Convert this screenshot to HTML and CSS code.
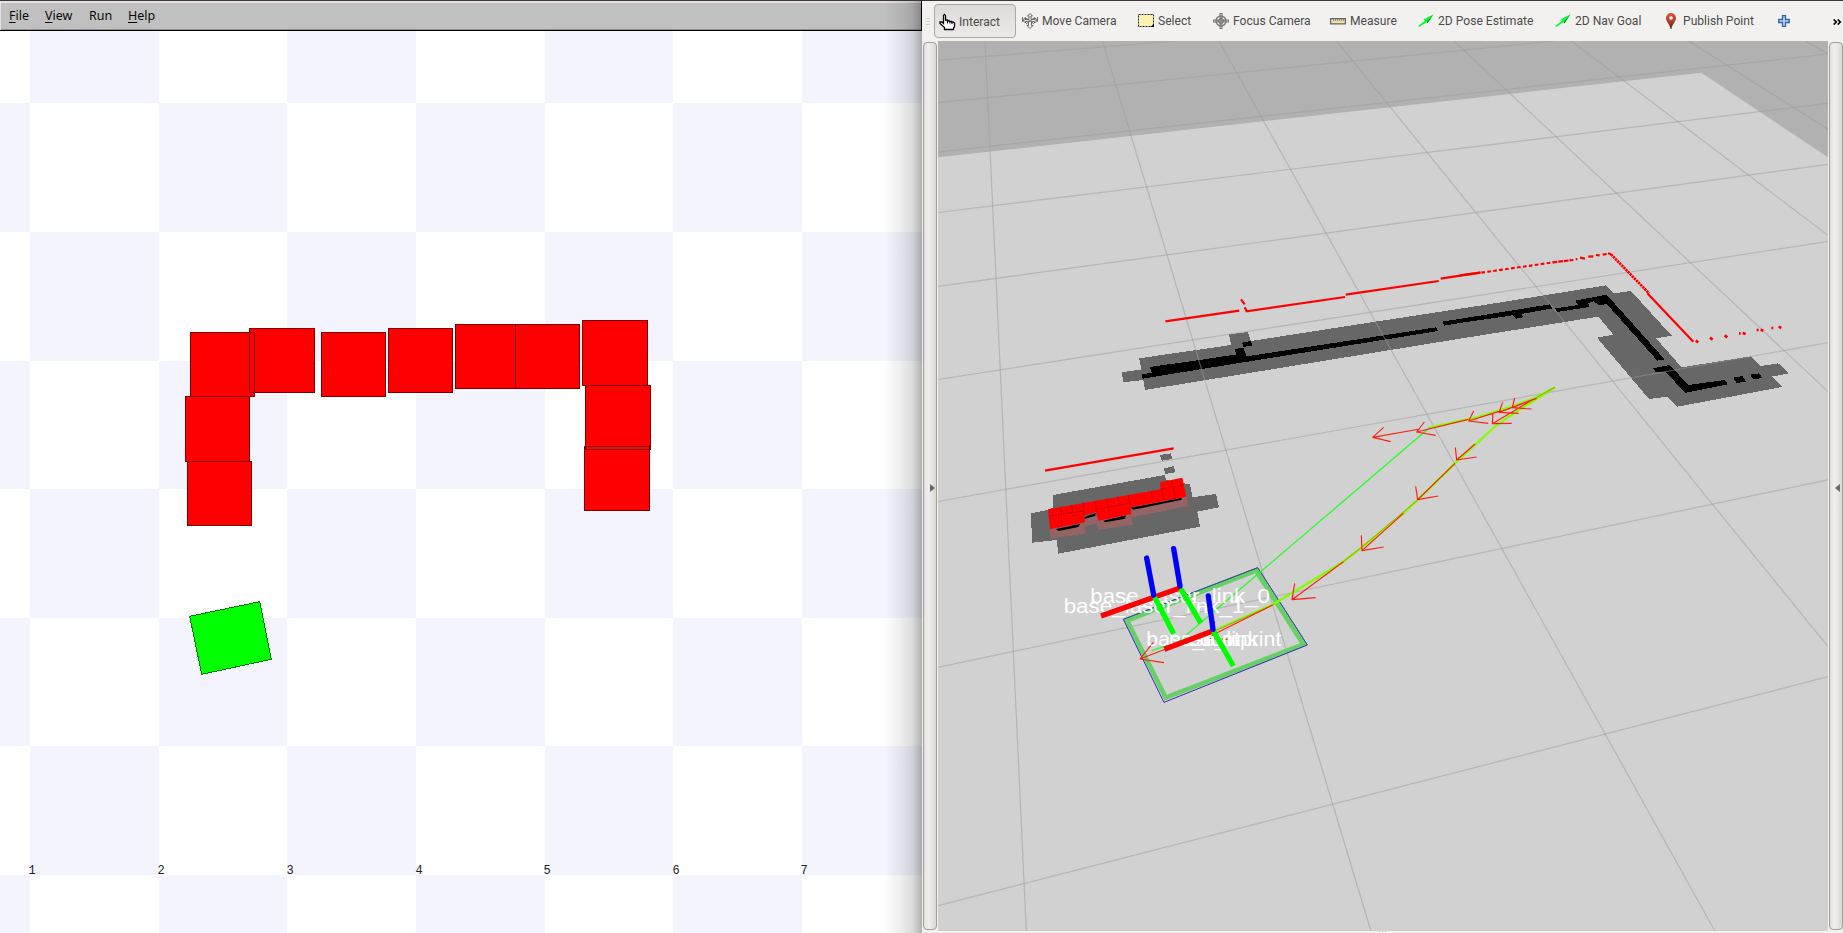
FILE: index.html
```
<!DOCTYPE html>
<html lang="en">
<head>
<meta charset="utf-8">
<title>Stage and RViz</title>
<link rel="stylesheet" href="styles.css">
</head>
<body>
<div class="desktop">
  <section class="stage">
    <nav class="menubar">
      <span class="menu-file"><u>F</u>ile</span>
      <span class="menu-view"><u>V</u>iew</span>
      <span class="menu-run">Run</span>
      <span class="menu-help"><u>H</u>elp</span>
    </nav>
    <svg class="world" viewBox="0 31 922 902" shape-rendering="crispEdges">
      <rect y="31" width="922" height="902" fill="#fff"/>
      <path fill="#f4f4ff" d="M30 31H159V103H30ZM287 31H416V103H287ZM545 31H673V103H545ZM802 31H922V103H802Z
        M0 103H30V232H0ZM159 103H287V232H159ZM416 103H545V232H416ZM673 103H802V232H673Z
        M30 232H159V361H30ZM287 232H416V361H287ZM545 232H673V361H545ZM802 232H922V361H802Z
        M0 361H30V489H0ZM159 361H287V489H159ZM416 361H545V489H416ZM673 361H802V489H673Z
        M30 489H159V618H30ZM287 489H416V618H287ZM545 489H673V618H545ZM802 489H922V618H802Z
        M0 618H30V746H0ZM159 618H287V746H159ZM416 618H545V746H416ZM673 618H802V746H673Z
        M30 746H159V875H30ZM287 746H416V875H287ZM545 746H673V875H545ZM802 746H922V875H802Z
        M0 875H30V933H0ZM159 875H287V933H159ZM416 875H545V933H416ZM673 875H802V933H673Z"/>
      <g class="boxes">
        <path d="M190.500 332.500h64v64h-64zM249.500 328.500h65v64h-65zM321.500 332.500h64v64h-64zM388.500 328.500h64v64h-64zM455.500 324.500h60v64h-60zM515.500 324.500h64v64h-64zM582.500 320.500h65v65h-65zM585.500 385.500h65v64h-65zM584.500 446.500h65v64h-65zM185.500 396.500h64v65h-64zM187.500 461.500h64v64h-64z"/>
      </g>
      <path class="robot" d="M189.700 616.300L259.700 601.700L271.300 659.300L201.700 674.300Z"/>
      <g class="ticks">
        <text x="28.500" y="874">1</text><text x="157.500" y="874">2</text><text x="286.500" y="874">3</text><text x="415.500" y="874">4</text><text x="543.500" y="874">5</text><text x="672.500" y="874">6</text><text x="800.500" y="874">7</text>
      </g>
    </svg>
    <div class="shade"></div>
  </section>

  <section class="rviz">
    <div class="toolbar">
      <div class="grip"><i></i><i></i><i></i></div>
      <div class="tool active">
        <svg class="icon" viewBox="0 0 16 16"><path d="M5.500 15.500V13.500L1 9.500V8H3L4.500 9.500V1.500L5.500 .5L6.500 1.500V6H8.500V7H10.500V7.500H12.500V8H14L15.500 9V13L14.500 14V15.500Z" fill="#fff" stroke="#000" stroke-width="1.300"/><path d="M8.500 6.500V9.500M11 7V9.500M13 8V10" stroke="#000" fill="none"/></svg>
        <span>Interact</span>
      </div>
      <div class="tool t-move">
        <svg class="icon" viewBox="0 0 16 16" fill="#f4f4f4" stroke="#555" stroke-width=".9"><path d="M8 .5L10.500 3H9V6.500H12.500V4.500L15.500 7L12.500 10V8.500H9.500V12.500H11L8 15.500L5 12.500H6.500V8.500H3.500V10L.5 7L3.500 4.500V6.500H7V3H5.500Z"/><path d="M.5 4V8.500L4 6M15.500 4V8.500L12 6M4 5L12 11M12 5L4 11" fill="none" stroke-width=".8"/></svg>
        <span>Move Camera</span>
      </div>
      <div class="tool t-select">
        <svg class="icon" viewBox="0 0 16 16"><path d="M.5 1.500H15.500V13.500H.5Z" fill="#fdf2b4" stroke="#222" stroke-dasharray="2 1"/><path d="M16 10.500V14H12.500Z" fill="#000"/></svg>
        <span>Select</span>
      </div>
      <div class="tool t-focus">
        <svg class="icon" viewBox="0 0 16 16" fill="none" stroke="#777"><path d="M8 0V16M0 8H16" stroke="#777" stroke-width="3"/><path d="M8 1V15M1 8H15" stroke="#ddd"/><circle cx="8" cy="8" r="5" stroke-width="1.400"/><circle cx="8" cy="8" r="2.500"/><path d="M8 4V12M4 8H12"/></svg>
        <span>Focus Camera</span>
      </div>
      <div class="tool t-measure">
        <svg class="icon" viewBox="0 0 16 16"><path d="M.6 5.600H15.400V10.900H.6Z" fill="#eee0a0" stroke="#666" stroke-width="1.200"/><path d="M3.500 6V8M5.500 6V8M7.500 6V8M9.500 6V8M11.500 6V8M13.500 6V8" stroke="#777" stroke-width=".8"/></svg>
        <span>Measure</span>
      </div>
      <div class="tool t-pose">
        <svg class="icon" viewBox="0 0 16 16"><path d="M15.500 1.200L5.500 6.500L7 7.800L.2 13L1.200 14L8.500 9.300L9.500 10.200Z" fill="#0f3"/><path d="M15.500 1.200L8.700 9.300L9.500 10.200Z" fill="#0a7a1a"/></svg>
        <span>2D Pose Estimate</span>
      </div>
      <div class="tool t-nav">
        <svg class="icon" viewBox="0 0 16 16"><path d="M15.500 1.200L5.500 6.500L7 7.800L.2 13L1.200 14L8.500 9.300L9.500 10.200Z" fill="#0f3"/><path d="M15.500 1.200L8.700 9.300L9.500 10.200Z" fill="#0a7a1a"/></svg>
        <span>2D Nav Goal</span>
      </div>
      <div class="tool t-publish">
        <svg class="icon" viewBox="0 0 16 16"><defs><linearGradient id="pin" x2="0" y2="1"><stop stop-color="#e0533a"/><stop offset=".5" stop-color="#b8402a"/><stop offset="1" stop-color="#3a3010"/></linearGradient></defs><path d="M8 0A5 5 0 0 1 13 5C13 9 9 11 8.500 16H7.500C7 11 3 9 3 5A5 5 0 0 1 8 0Z" fill="url(#pin)"/><circle cx="8" cy="5" r="1.800" fill="#fff"/></svg>
        <span>Publish Point</span>
      </div>
      <div class="tool t-plus">
        <svg class="icon plus" viewBox="0 0 12 12"><path d="M4.500 .7H7.500V4.500H11.300V7.500H7.500V11.300H4.500V7.500H.7V4.500H4.500Z" fill="#b9d2ee" stroke="#3465a4" stroke-width="1.300"/></svg>
      </div>
      <svg class="more" viewBox="0 0 9 6" fill="none" stroke="#000" stroke-width="1.600"><path d="M.7 .4L3.300 3L.7 5.600M4.700 .4L7.300 3L4.700 5.600"/></svg>
    </div>
    <div class="body">
      <div class="splitter left"><svg viewBox="0 0 5 8"><path d="M0 0L5 4L0 8Z" fill="#666"/></svg></div>
      <svg class="scene" viewBox="938 41 890 890">
        <rect x="938" y="41" width="890" height="890" fill="#b1b1b1"/>
        <path d="M938 157.300L1701.300 72.700L1828 157.300V931H938Z" fill="#d1d1d1"/>
        <!-- costmap walls -->
        <g transform="translate(1100 240) scale(.33333)" shape-rendering="crispEdges">
          <path fill="#676767" d="M65 397L125 388L117 355L393 315L387 283L443 276L453 303L820 246L1140 197L1518 136L1543 160L1593 153L1715 287L1668 295L1745 382L1952 349L1982 378L2035 370L2066 400L2015 410L2046 441L1733 500L1702 470L1647 477L1491 293L1540 284L1495 230L1080 296L135 450L130 420L70 427Z"/>
          <path d="M150 381L298 360L410 343L403 327L430 323L440 349L1008 262L1015 273L300 388L128 416L126 403L155 398ZM426 308L453 303L456 317L430 321ZM1027 245L1350 193L1358 205L1265 222L1270 232L1250 236L1238 226L1080 249L1032 257Z"/>
        </g>
        <g transform="translate(1460 230) scale(.33333)" shape-rendering="crispEdges">
          <path d="M285 235L355 225L345 212L440 194L614 388L592 392L440 222L418 226L400 214L385 220L388 231L292 246ZM580 415L630 405L684 465L795 450L803 463L675 489L618 426L587 427ZM820 443L848 438L857 455L830 459ZM870 434L897 430L907 444L880 448Z"/>
        </g>
        <g transform="translate(1010 430) scale(.33333)" shape-rendering="crispEdges" fill="#676767">
          <path d="M129 195L465 135L468 150L540 163L548 202L618 192L627 232L562 245L570 290L145 371L140 330L67 338L62 250L113 240L130 232ZM450 75L483 70L487 87L455 92ZM462 115L492 108L495 127L465 132Z"/>
        </g>
        <g class="grid">
          <path d="M938 60.200L1177 41M938 102.700L1554 41M938 152L1828 54M938 212.500L1828 103.300M938 286.300L1828 164.300M938 379.500L1828 241.300M938 501.500L1828 342.700M938 667.300L1828 479.800M938 905.700L1828 676.700"/>
          <path d="M985 41L1026.300 931M1102.500 41L1370.900 931M1219 41L1714.900 931M1336.700 41L1828 646.700M1454 41L1828 391.600M1571.300 41L1828 235.300M1688.700 41L1828 129.300M1805.700 41L1828 53.700"/>
        </g>
        <!-- laser scan -->
        <g transform="translate(1100 240) scale(.33333)" class="scan">
          <path d="M196 244L418 212M423 178L434 193M434 202L440 214L735 171M737 164L1016 123M1022 116L1140 98"/>
        </g>
        <g transform="translate(1460 230) scale(.33333)" class="scan">
          <path d="M0 136L62 128"/>
          <path d="M64 128L280 97" stroke-dasharray="11 7"/>
          <path d="M278 97L340 90" stroke-dasharray="14 3"/>
          <path d="M347 88L352 87M360 83L375 86M385 80L400 79M408 75L419 76M428 74L440 72M444 70L454 73"/>
          <path d="M453 73L567 190" stroke-width="8" stroke-dasharray="7 2"/>
          <path d="M562 190L700 335"/>
          <path d="M707 332L715 337M750 323L758 329M794 316L802 322M837 310h5M848 309L857 312M890 300h6M902 299L910 302M934 294h6M956 290L964 294" stroke-width="8"/>
        </g>
        <g transform="translate(1010 430) scale(.33333)">
          <path class="scan" stroke-width="7" d="M105 122L491 55"/>
          <path fill="#946363" d="M120 290L122 326L228 310L225 288L262 280L265 300L369 284L365 262L536 228L528 195Z" shape-rendering="crispEdges"/>
          <path d="M138 297L210 282L205 291L145 303ZM222 262L258 249L255 258L225 266ZM280 272L348 256L345 266L285 277ZM362 233L515 204L515 209L370 239Z"/>
          <path fill="#f00" d="M114 238L452 178L450 157L517 143L529 200L362 232L364 252L265 272L258 247L222 257L225 277L120 298Z"/>
          <path fill="none" stroke="#b00" stroke-width="2" d="M116 258L218 243M185 225L188 248M152 232L157 290M220 218L223 255M254 212L259 245M290 207L295 230M323 200L328 224M355 195L361 228M424 184L428 212M452 176L520 165M486 152L496 204M258 237L360 220M295 229L299 264M154 253L220 243M454 176L462 210"/>

          <!-- footprint -->
          <path d="M351 572L738 422L880 643L467 803Z" fill="none" stroke="#66d066" stroke-width="14"/>
          <path d="M340 568L743 413L892 645L462 817Z" fill="none" stroke="#3c20c8" stroke-width="3"/>
          <path d="M340 568L743 413L892 645" fill="none" stroke="#2f7060" stroke-width="2"/>
        </g>
        <g transform="translate(1260 370) scale(.33333)" fill="none" stroke-linejoin="round">
          <path stroke="#2f2" stroke-width="3.700" d="M510 172L0 607L-245 815L-325 842"/>
          <path stroke="#80ff00" stroke-width="7" d="M885 52L820 86L760 108L650 142L510 172M885 52L780 118L710 165L590 275L475 388L430 430L305 532L250 575L45 700L-140 783"/>
          <path stroke="#c08010" stroke-width="2.500" d="M885 52L820 88M585 280L475 388L305 532L250 575M45 702L-140 785"/>
          <path stroke="#ff2010" stroke-width="3.500" d="M480 177L338 202M371 172L338 202L392 215M625 148L470 186M493 156L470 186L527 196M725 122L626 153M641 123L626 153L685 160M820 88L717 127M728 97L717 127L776 130M830 85L757 113M764 84L757 113L815 117M820 88L697 161M699 128L697 161L755 160M645 222L590 270M586 232L590 270L650 261M585 280L473 389M467 349L473 389L535 378M430 430L306 542M304 496L306 542L371 531M250 575L96 689M104 640L96 689L167 683M38 705L-162 805M-135 755L-162 805L-88 808M-285 838L-360 867M-320 817L-360 867L-288 878"/>
        </g>
        <g transform="translate(1010 430) scale(.33333)">
          <g class="frames">
            <text x="241" y="519" textLength="539" lengthAdjust="spacingAndGlyphs">base_laser_link_0</text>
            <text x="161" y="549" textLength="542" lengthAdjust="spacingAndGlyphs">base_laser_link_1</text>
            <text x="409" y="649" textLength="405" lengthAdjust="spacingAndGlyphs">base_footprint</text>
            <text x="477" y="649" textLength="268" lengthAdjust="spacingAndGlyphs">base_link</text>
            <text x="538" y="649" textLength="148" lengthAdjust="spacingAndGlyphs">odom</text>
          </g>
          <g fill="none" stroke-width="16">
            <path stroke="#f00" d="M273 558L510 474M463 658L608 603"/>
            <path stroke="#0f0" d="M434 502L491 611M512 476L572 579M611 604L670 708"/>
            <path stroke="#00f" stroke-linecap="round" d="M410 384L431 495M491 356L510 468M595 498L609 598"/>
          </g>
        </g>
      </svg>
      <div class="splitter right"><svg viewBox="0 0 5 8"><path d="M5 0L0 4L5 8Z" fill="#666"/></svg></div>
    </div>
    <div class="foot"><i></i><i></i><i></i></div>
  </section>
</div>
</body>
</html>
```
FILE: styles.css
```
* { box-sizing: border-box; }
body { margin: 0; width: 1843px; height: 933px; overflow: hidden; background: #f2f1ef; }
svg { display: block; }
.desktop { display: flex; width: 1843px; height: 933px; }

.stage { position: relative; width: 922px; display: flex; flex-direction: column; }
.menubar {
  display: flex; height: 31px; padding: 3px 0 0 9px;
  background: #c0c0c0; border-top: 1px solid #3c3838; border-bottom: 1px solid #000; border-right: 1px solid #000;
  box-shadow: inset 1px 2px 0 #e4e0e4, inset 0 -1px 0 #909090;
  font: 12.5px/24px "Noto Sans", sans-serif; color: #0a0a0a;
}
.menubar u { text-underline-offset: 2px; text-decoration-thickness: 1px; }
.menu-file { width: 36px; }
.menu-view { width: 44px; }
.menu-run { width: 39px; }
.world { width: 922px; height: 902px; }
.boxes path { fill: #f00; stroke: #7a0000; }
.robot { fill: #0f0; stroke: #008000; }
.ticks { font: 12px "Liberation Mono", monospace; fill: #222; }
.shade {
  position: absolute; top: 1px; right: 0; bottom: 0; width: 38px;
  background: linear-gradient(to right, rgba(0,0,0,0), rgba(0,0,0,.07) 45%, rgba(0,0,0,.14) 75%, rgba(0,0,0,.31));
}

.rviz { width: 921px; display: flex; flex-direction: column; background: #f2f1ef; }
.toolbar {
  display: flex; height: 41px; padding-left: 4px; border-top: 1px solid #3c3838;
  font: 12.1px/16px Roboto, sans-serif; color: #4c4c4c; align-items: flex-start;
}
.grip { width: 8px; padding-top: 17px; display: flex; flex-direction: column; gap: 2px; }
.grip i { width: 4px; height: 1px; background: #cfcdca; }
.tool { display: flex; gap: 4px; height: 32px; align-items: center; margin-top: 4px; white-space: nowrap; }
.tool span { flex: none; }
.active {
  width: 82px; height: 34px; margin: 3px 6px 0 0; padding: 1px 0 0 4px;
  border: 1px solid #aaa7a2; border-radius: 4px; background: linear-gradient(#dcdbd9, #ebeae9);
}
.icon { width: 16px; height: 16px; flex: none; overflow: visible; }
.t-move { width: 116px; }
.t-select { width: 75px; }
.t-focus { width: 117px; }
.t-measure { width: 88px; }
.t-pose { width: 137px; }
.t-nav { width: 108px; }
.t-publish { width: 115px; }
.t-plus { width: 55px; }
.plus { width: 12px; height: 12px; }
.more { width: 9px; height: 6px; margin-top: 18px; }

.body { display: flex; height: 890px; }
.splitter {
  width: 14px; height: 888px; margin: 1px 1px 0; display: flex; align-items: center;
  border: 1px solid #a09f98; border-radius: 4px;
  background: linear-gradient(to right, #e0dfdd, #f0efee 35%, #e8e7e5 65%, #d8d7d4);
}
.splitter svg { width: 5px; height: 8px; margin-top: 3px; }
.left { justify-content: flex-end; padding-right: 1px; }
.right { margin-right: 0; padding-left: 5px; }
.scene { width: 890px; height: 890px; flex: none; }
.grid { fill: none; stroke: #9c9c9c; stroke-opacity: .5; stroke-width: 1.200; }
.scan { fill: none; stroke: #f00; }
g.scan { stroke-width: 6.500; }
.frames { font: 61px "Liberation Sans", sans-serif; fill: #fff; }
.foot { display: flex; justify-content: center; gap: 2px; height: 2px; }
.foot i { width: 1px; height: 1px; background: #bbb; }
```
